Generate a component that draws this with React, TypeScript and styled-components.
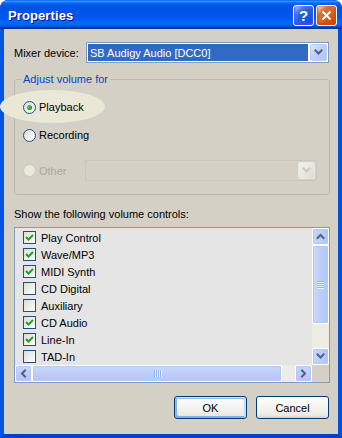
import React from 'react';
import styled, { createGlobalStyle } from 'styled-components';

const GlobalStyle = createGlobalStyle`
  html, body { margin: 0; padding: 0; background: #fff; }
  body {
    font-family: 'Liberation Sans', Arial, sans-serif;
    font-size: 11px;
    color: #000;
  }
  * { box-sizing: border-box; }
`;

const DIALOG_BG = '#d4d0c5';

const Window = styled.div`
  width: 342px;
  height: 438px;
  display: flex;
  flex-direction: column;
  background: #0831d9;
  border-radius: 8px 8px 0 0;
  overflow: hidden;
`;

const TitleBar = styled.div`
  height: 29px;
  flex: 0 0 29px;
  display: flex;
  align-items: center;
  padding: 2px 5px 0 8px;
  border-radius: 8px 8px 0 0;
  background: linear-gradient(
    180deg,
    #0058ee 0%,
    #3593ff 4%,
    #288eff 6%,
    #127dff 8%,
    #036ffc 10%,
    #0262ee 14%,
    #0057e5 20%,
    #0054e3 24%,
    #0055eb 56%,
    #005bf5 66%,
    #026afe 76%,
    #0062ef 86%,
    #0052d6 92%,
    #0040ab 94%,
    #003092 100%
  );
`;

const Title = styled.span`
  font-weight: bold;
  font-size: 13px;
  color: #fff;
  letter-spacing: 0.1px;
  text-shadow: 1px 1px #0f1089;
`;

const CaptionButtons = styled.div`
  margin-left: auto;
  display: flex;
  gap: 2px;
`;

const CaptionButton = styled.div<{ $variant: 'help' | 'close' }>`
  width: 21px;
  height: 21px;
  border: 1px solid #fff;
  border-radius: 3px;
  display: flex;
  align-items: center;
  justify-content: center;
  color: #fff;
  font-weight: bold;
  font-size: 15px;
  background: ${({ $variant }) =>
    $variant === 'help'
      ? 'radial-gradient(circle at 90% 90%, #0054e9 0%, #2263d5 55%, #4479e4 70%, #a3bbec 90%, #fff 100%)'
      : 'radial-gradient(circle at 90% 90%, #cc4600 0%, #dc6527 55%, #cd7546 70%, #ffccb2 90%, #fff 100%)'};
  box-shadow: ${({ $variant }) =>
    $variant === 'help' ? 'inset 0 -1px 2px 1px #4646ff' : 'inset 0 -1px 2px 1px #da4600'};
`;

const Frame = styled.div`
  flex: 1;
  display: flex;
  flex-direction: column;
  background: ${DIALOG_BG};
  border-style: solid;
  border-width: 0 4px 4px 4px;
  border-color: #0054e3 #0050dc #0042c8 #0054e3;
  padding: 13px 8px 0 10px;
`;

const MixerRow = styled.div`
  display: flex;
  align-items: center;
  height: 21px;
`;

const Label = styled.span<{ $width?: number }>`
  width: ${({ $width }) => ($width ? `${$width}px` : 'auto')};
  flex: 0 0 auto;
`;

const Combo = styled.div<{ $disabled?: boolean; $width?: number }>`
  display: flex;
  align-items: stretch;
  height: 21px;
  width: ${({ $width }) => ($width ? `${$width}px` : 'auto')};
  flex: ${({ $width }) => ($width ? '0 0 auto' : '1')};
  margin-right: ${({ $width }) => ($width ? 0 : 1)}px;
  border: 1px solid ${({ $disabled }) => ($disabled ? '#c9c7ba' : '#7f9db9')};
  background: ${({ $disabled }) => ($disabled ? DIALOG_BG : '#fff')};
  padding: 1px;
`;

const ComboText = styled.div`
  flex: 1;
  display: flex;
  align-items: center;
  padding-left: 2px;
  margin-right: 2px;
  background: #316ac5;
  color: #fff;
`;

const ComboSpacer = styled.div`
  flex: 1;
`;

const DropButton = styled.div<{ $disabled?: boolean }>`
  width: 17px;
  flex: 0 0 17px;
  display: flex;
  align-items: center;
  justify-content: center;
  border-radius: 2px;
  border: 1px solid ${({ $disabled }) => ($disabled ? '#e8e7e1' : '#bbcaf3')};
  background: ${({ $disabled }) =>
    $disabled
      ? 'linear-gradient(135deg, #f2f1ec, #dedcd3)'
      : 'linear-gradient(135deg, #dbe6fd 0%, #bccef9 45%, #b1c6f7 100%)'};
`;

const Group = styled.fieldset`
  margin: 10px 0 0 0;
  padding: 11px 0 13px 6px;
  border: 1px solid #bdbaab;
  border-radius: 3px;
  min-width: 0;
`;

const Legend = styled.legend`
  color: #0046d5;
  padding: 0 2px;
  line-height: 13px;
`;

const RadioRow = styled.div<{ $highlight?: boolean; $gap: number; $height: number }>`
  position: relative;
  display: flex;
  align-items: center;
  height: ${({ $height }) => $height}px;
  margin-top: ${({ $gap }) => $gap}px;
  padding-left: 2px;

  ${({ $highlight }) =>
    $highlight
      ? `
    &::before {
      content: '';
      position: absolute;
      left: -21px;
      top: -7px;
      width: 105px;
      height: 33px;
      border-radius: 50%;
      background: radial-gradient(ellipse at center, #eae8d7 0%, #e9e7d6 72%, rgba(233,231,214,0) 100%);
    }
  `
      : ''}
`;

const RadioCircle = styled.span<{ $checked?: boolean; $disabled?: boolean }>`
  position: relative;
  width: 13px;
  height: 13px;
  flex: 0 0 13px;
  border-radius: 50%;
  border: 1px solid ${({ $disabled }) => ($disabled ? '#cac8bb' : '#1c5180')};
  background: ${({ $disabled }) =>
    $disabled ? '#ebe9dc' : 'linear-gradient(135deg, #dcdcd7 0%, #ffffff 100%)'};
  margin-right: 3px;

  ${({ $checked }) =>
    $checked
      ? `
    &::after {
      content: '';
      position: absolute;
      left: 3px;
      top: 3px;
      width: 5px;
      height: 5px;
      border-radius: 50%;
      background: radial-gradient(circle at 35% 35%, #55d755 0%, #21a121 60%, #1a8a1a 100%);
    }
  `
      : ''}
`;

const RadioLabel = styled.span<{ $disabled?: boolean; $width?: number }>`
  position: relative;
  width: ${({ $width }) => ($width ? `${$width}px` : 'auto')};
  color: ${({ $disabled }) => ($disabled ? '#aca899' : '#000')};
`;

const SectionLabel = styled.div`
  margin-top: 13px;
  line-height: 13px;
`;

const ListBox = styled.div`
  margin-top: 6px;
  height: 156px;
  border: 1px solid #7f9db9;
  background: #e5e5e5;
  display: grid;
  grid-template-columns: 1fr 17px;
  grid-template-rows: 1fr 17px;
`;

const ListItems = styled.div`
  padding: 1px 0 0 8px;
  overflow: hidden;
`;

const ItemRow = styled.div`
  display: flex;
  align-items: center;
  height: 17px;
  gap: 5px;
`;

const CheckBox = styled.span`
  width: 13px;
  height: 13px;
  flex: 0 0 13px;
  border: 1px solid #1c5180;
  background: linear-gradient(135deg, #dcdcd7 0%, #ffffff 100%);
  display: flex;
  align-items: center;
  justify-content: center;
`;

const VScroll = styled.div`
  display: flex;
  flex-direction: column;
  background: #eeede5;
`;

const HScroll = styled.div`
  display: flex;
  background: #eeede5;
`;

const ScrollButton = styled.div<{ $vertical?: boolean }>`
  flex: 0 0 17px;
  display: flex;
  align-items: center;
  justify-content: center;
  border: 1px solid #fff;
  border-radius: 2px;
  box-shadow: inset 0 0 0 1px #b4c8f6;
  background: ${({ $vertical }) =>
    $vertical
      ? 'linear-gradient(90deg, #c6d6fc 0%, #bccff9 50%, #b0c4f5 100%)'
      : 'linear-gradient(180deg, #c6d6fc 0%, #bccff9 50%, #b0c4f5 100%)'};
`;

const Thumb = styled.div<{ $vertical?: boolean; $size: number }>`
  flex: 0 0 ${({ $size }) => $size}px;
  display: flex;
  flex-direction: ${({ $vertical }) => ($vertical ? 'column' : 'row')};
  align-items: center;
  justify-content: center;
  gap: 1px;
  border: 1px solid #fff;
  border-radius: 2px;
  box-shadow: inset 0 0 0 1px #b4c8f6;
  background: ${({ $vertical }) =>
    $vertical
      ? 'linear-gradient(90deg, #c9d8fc 0%, #bccff9 50%, #b2c6f6 100%)'
      : 'linear-gradient(180deg, #c9d8fc 0%, #bccff9 50%, #b2c6f6 100%)'};
`;

const Grip = styled.span<{ $vertical?: boolean }>`
  display: block;
  width: ${({ $vertical }) => ($vertical ? '7px' : '1px')};
  height: ${({ $vertical }) => ($vertical ? '1px' : '7px')};
  background: #8cb0f8;
  box-shadow: ${({ $vertical }) => ($vertical ? '0 1px #eef4fe' : '1px 0 #eef4fe')};
`;

const Track = styled.div`
  flex: 1;
`;

const Corner = styled.div`
  background: ${DIALOG_BG};
`;

const ButtonBar = styled.div`
  display: flex;
  justify-content: flex-end;
  gap: 9px;
  margin-top: 13px;
  padding-right: 1px;
`;

const PushButton = styled.div<{ $default?: boolean }>`
  width: 73px;
  height: 23px;
  display: flex;
  align-items: center;
  justify-content: center;
  border: 1px solid #003c74;
  border-radius: 3px;
  background: linear-gradient(180deg, #ffffff 0%, #ecebe6 86%, #d6d0c5 100%);
  box-shadow: ${({ $default }) =>
    $default
      ? 'inset -1px 1px #cee7ff, inset 1px 2px #98b8ea, inset -2px 2px #bcd4f6, inset 1px -1px #89ade4, inset 2px -2px #89ade4'
      : 'none'};
`;

const Chevron = ({ color, dir }: { color: string; dir: 'up' | 'down' | 'left' | 'right' }) => {
  const d = {
    down: 'M1.5 2.5 L4.5 5.5 L7.5 2.5',
    up: 'M1.5 6 L4.5 3 L7.5 6',
    left: 'M6 1.5 L3 4.5 L6 7.5',
    right: 'M3 1.5 L6 4.5 L3 7.5',
  }[dir];
  return (
    <svg width="9" height="9" viewBox="0 0 9 9">
      <path d={d} fill="none" stroke={color} strokeWidth="2" strokeLinecap="square" />
    </svg>
  );
};

const items: { name: string; checked: boolean }[] = [
  { name: 'Play Control', checked: true },
  { name: 'Wave/MP3', checked: true },
  { name: 'MIDI Synth', checked: true },
  { name: 'CD Digital', checked: false },
  { name: 'Auxiliary', checked: false },
  { name: 'CD Audio', checked: true },
  { name: 'Line-In', checked: true },
  { name: 'TAD-In', checked: false },
];

export default function App() {
  return (
    <>
      <GlobalStyle />
      <Window>
        <TitleBar>
          <Title>Properties</Title>
          <CaptionButtons>
            <CaptionButton $variant="help">?</CaptionButton>
            <CaptionButton $variant="close">
              <svg width="11" height="11" viewBox="0 0 11 11">
                <path d="M1.5 1.5 L9.5 9.5 M9.5 1.5 L1.5 9.5" stroke="#fff" strokeWidth="2" />
              </svg>
            </CaptionButton>
          </CaptionButtons>
        </TitleBar>
        <Frame>
          <MixerRow>
            <Label $width={72}>Mixer device:</Label>
            <Combo>
              <ComboText>SB Audigy Audio [DCC0]</ComboText>
              <DropButton>
                <Chevron color="#4d6185" dir="down" />
              </DropButton>
            </Combo>
          </MixerRow>

          <Group>
            <Legend>Adjust volume for</Legend>
            <RadioRow $highlight $gap={0} $height={20}>
              <RadioCircle $checked />
              <RadioLabel>Playback</RadioLabel>
            </RadioRow>
            <RadioRow $gap={8} $height={20}>
              <RadioCircle />
              <RadioLabel>Recording</RadioLabel>
            </RadioRow>
            <RadioRow $gap={15} $height={21}>
              <RadioCircle $disabled />
              <RadioLabel $disabled $width={46}>
                Other
              </RadioLabel>
              <Combo $disabled $width={232}>
                <ComboSpacer />
                <DropButton $disabled>
                  <Chevron color="#c9c7ba" dir="down" />
                </DropButton>
              </Combo>
            </RadioRow>
          </Group>

          <SectionLabel>Show the following volume controls:</SectionLabel>

          <ListBox>
            <ListItems>
              {items.map((item) => (
                <ItemRow key={item.name}>
                  <CheckBox>
                    {item.checked && (
                      <svg width="9" height="9" viewBox="0 0 9 9">
                        <path d="M1 4 L3.5 6.5 L8 2" fill="none" stroke="#21a121" strokeWidth="2" />
                      </svg>
                    )}
                  </CheckBox>
                  <span>{item.name}</span>
                </ItemRow>
              ))}
            </ListItems>
            <VScroll>
              <ScrollButton $vertical>
                <Chevron color="#4d6185" dir="up" />
              </ScrollButton>
              <Thumb $vertical $size={79}>
                <Grip $vertical />
                <Grip $vertical />
                <Grip $vertical />
                <Grip $vertical />
              </Thumb>
              <Track />
              <ScrollButton $vertical>
                <Chevron color="#4d6185" dir="down" />
              </ScrollButton>
            </VScroll>
            <HScroll>
              <ScrollButton>
                <Chevron color="#4d6185" dir="left" />
              </ScrollButton>
              <Thumb $size={250}>
                <Grip />
                <Grip />
                <Grip />
                <Grip />
              </Thumb>
              <Track />
              <ScrollButton>
                <Chevron color="#4d6185" dir="right" />
              </ScrollButton>
            </HScroll>
            <Corner />
          </ListBox>

          <ButtonBar>
            <PushButton $default>OK</PushButton>
            <PushButton>Cancel</PushButton>
          </ButtonBar>
        </Frame>
      </Window>
    </>
  );
}
